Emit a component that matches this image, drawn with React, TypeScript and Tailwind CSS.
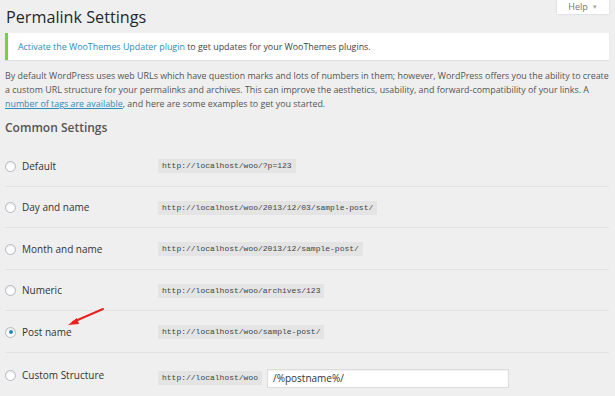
import React from 'react';

const rows = [
  { label: 'Default', code: 'http://localhost/woo/?p=123' },
  { label: 'Day and name', code: 'http://localhost/woo/2013/12/03/sample-post/' },
  { label: 'Month and name', code: 'http://localhost/woo/2013/12/sample-post/' },
  { label: 'Numeric', code: 'http://localhost/woo/archives/123' },
  { label: 'Post name', code: 'http://localhost/woo/sample-post/', checked: true },
];

const Radio = ({ checked }: { checked?: boolean }) => (
  <span className="w-[11px] h-[11px] rounded-full border border-[#b4b9be] bg-white shadow-[inset_0_1px_2px_rgba(0,0,0,0.1)] flex items-center justify-center shrink-0">
    {checked && <span className="w-[4px] h-[4px] rounded-full bg-[#1e8cbe]" />}
  </span>
);

const Code = ({ children }: { children: React.ReactNode }) => (
  <code className="bg-[#e4e4e4] px-[4px] h-[14px] leading-[14px] inline-block text-[8px] text-[#444] font-['Liberation_Mono',monospace]">
    {children}
  </code>
);

export default function App() {
  return (
    <div className="w-[615px] h-[396px] overflow-hidden bg-[#efefef] font-['Open_Sans',sans-serif] text-[#444] relative">
      {/* Help tab */}
      <div className="absolute right-[6px] top-0 w-[52px] h-[14px] bg-white shadow-[0_0_2px_rgba(0,0,0,0.15)] flex items-center justify-center gap-[4px] text-[9px] text-[#72777c]">
        Help <span className="text-[6px] text-[#a0a5aa]">▼</span>
      </div>

      <div className="pl-[5px] pr-[6px]">
        <h1 className="pl-[1px] pt-[6px] h-[33px] text-[16.2px] leading-[22px] text-[#23282d]">Permalink Settings</h1>

        <div className="h-[27px] bg-white border-l-[3px] border-[#7ad03a] shadow-[0_1px_1px_rgba(0,0,0,0.06)] flex items-center pl-[10px] text-[8.9px]">
          <span className="text-[#2e8bbd]">Activate the WooThemes Updater plugin</span>
          <span>&nbsp;to get updates for your WooThemes plugins.</span>
        </div>

        <p className="mt-[9px] text-[8.9px] leading-[14px] text-[#555] whitespace-nowrap">
          By default WordPress uses web URLs which have question marks and lots of numbers in them; however, WordPress offers you the ability to create
          <br />
          a custom URL structure for your permalinks and archives. This can improve the aesthetics, usability, and forward-compatibility of your links. A
          <br />
          <span className="text-[#2e8bbd] underline">number of tags are available</span>, and here are some examples to get you started.
        </p>

        <h2 className="mt-[9px] text-[12px] leading-[16px] font-semibold text-[#555]">Common Settings</h2>

        <div className="mt-[9px]">
          {rows.map((r) => (
            <div key={r.label} className="h-[41.5px] border-b border-[#e3e3e3] flex items-center pt-[2px]">
              <div className="w-[153px] flex items-center gap-[6px] text-[10px] text-[#333]">
                <Radio checked={r.checked} />
                {r.label}
              </div>
              <Code>{r.code}</Code>
            </div>
          ))}
          <div className="h-[41px] flex items-start pt-[15px]">
            <div className="w-[153px] flex items-center gap-[6px] text-[10px] text-[#333]">
              <Radio />
              Custom Structure
            </div>
            <div className="flex items-center gap-[5px] mt-[1px]">
              <Code>http://localhost/woo</Code>
              <div className="w-[242px] h-[19px] bg-white border border-[#ddd] shadow-[inset_0_1px_2px_rgba(0,0,0,0.07)] flex items-center pl-[5px] text-[10px] text-[#333]">
                /%postname%/
              </div>
            </div>
          </div>
        </div>
      </div>

      {/* annotation arrow */}
      <svg className="absolute left-0 top-0" width="615" height="396" viewBox="0 0 615 396">
        <line x1="103" y1="309" x2="73" y2="322" stroke="#e8231f" strokeWidth="2" strokeLinecap="round" />
        <polygon points="68,325 77,318 79,324" fill="#e8231f" />
      </svg>
    </div>
  );
}
